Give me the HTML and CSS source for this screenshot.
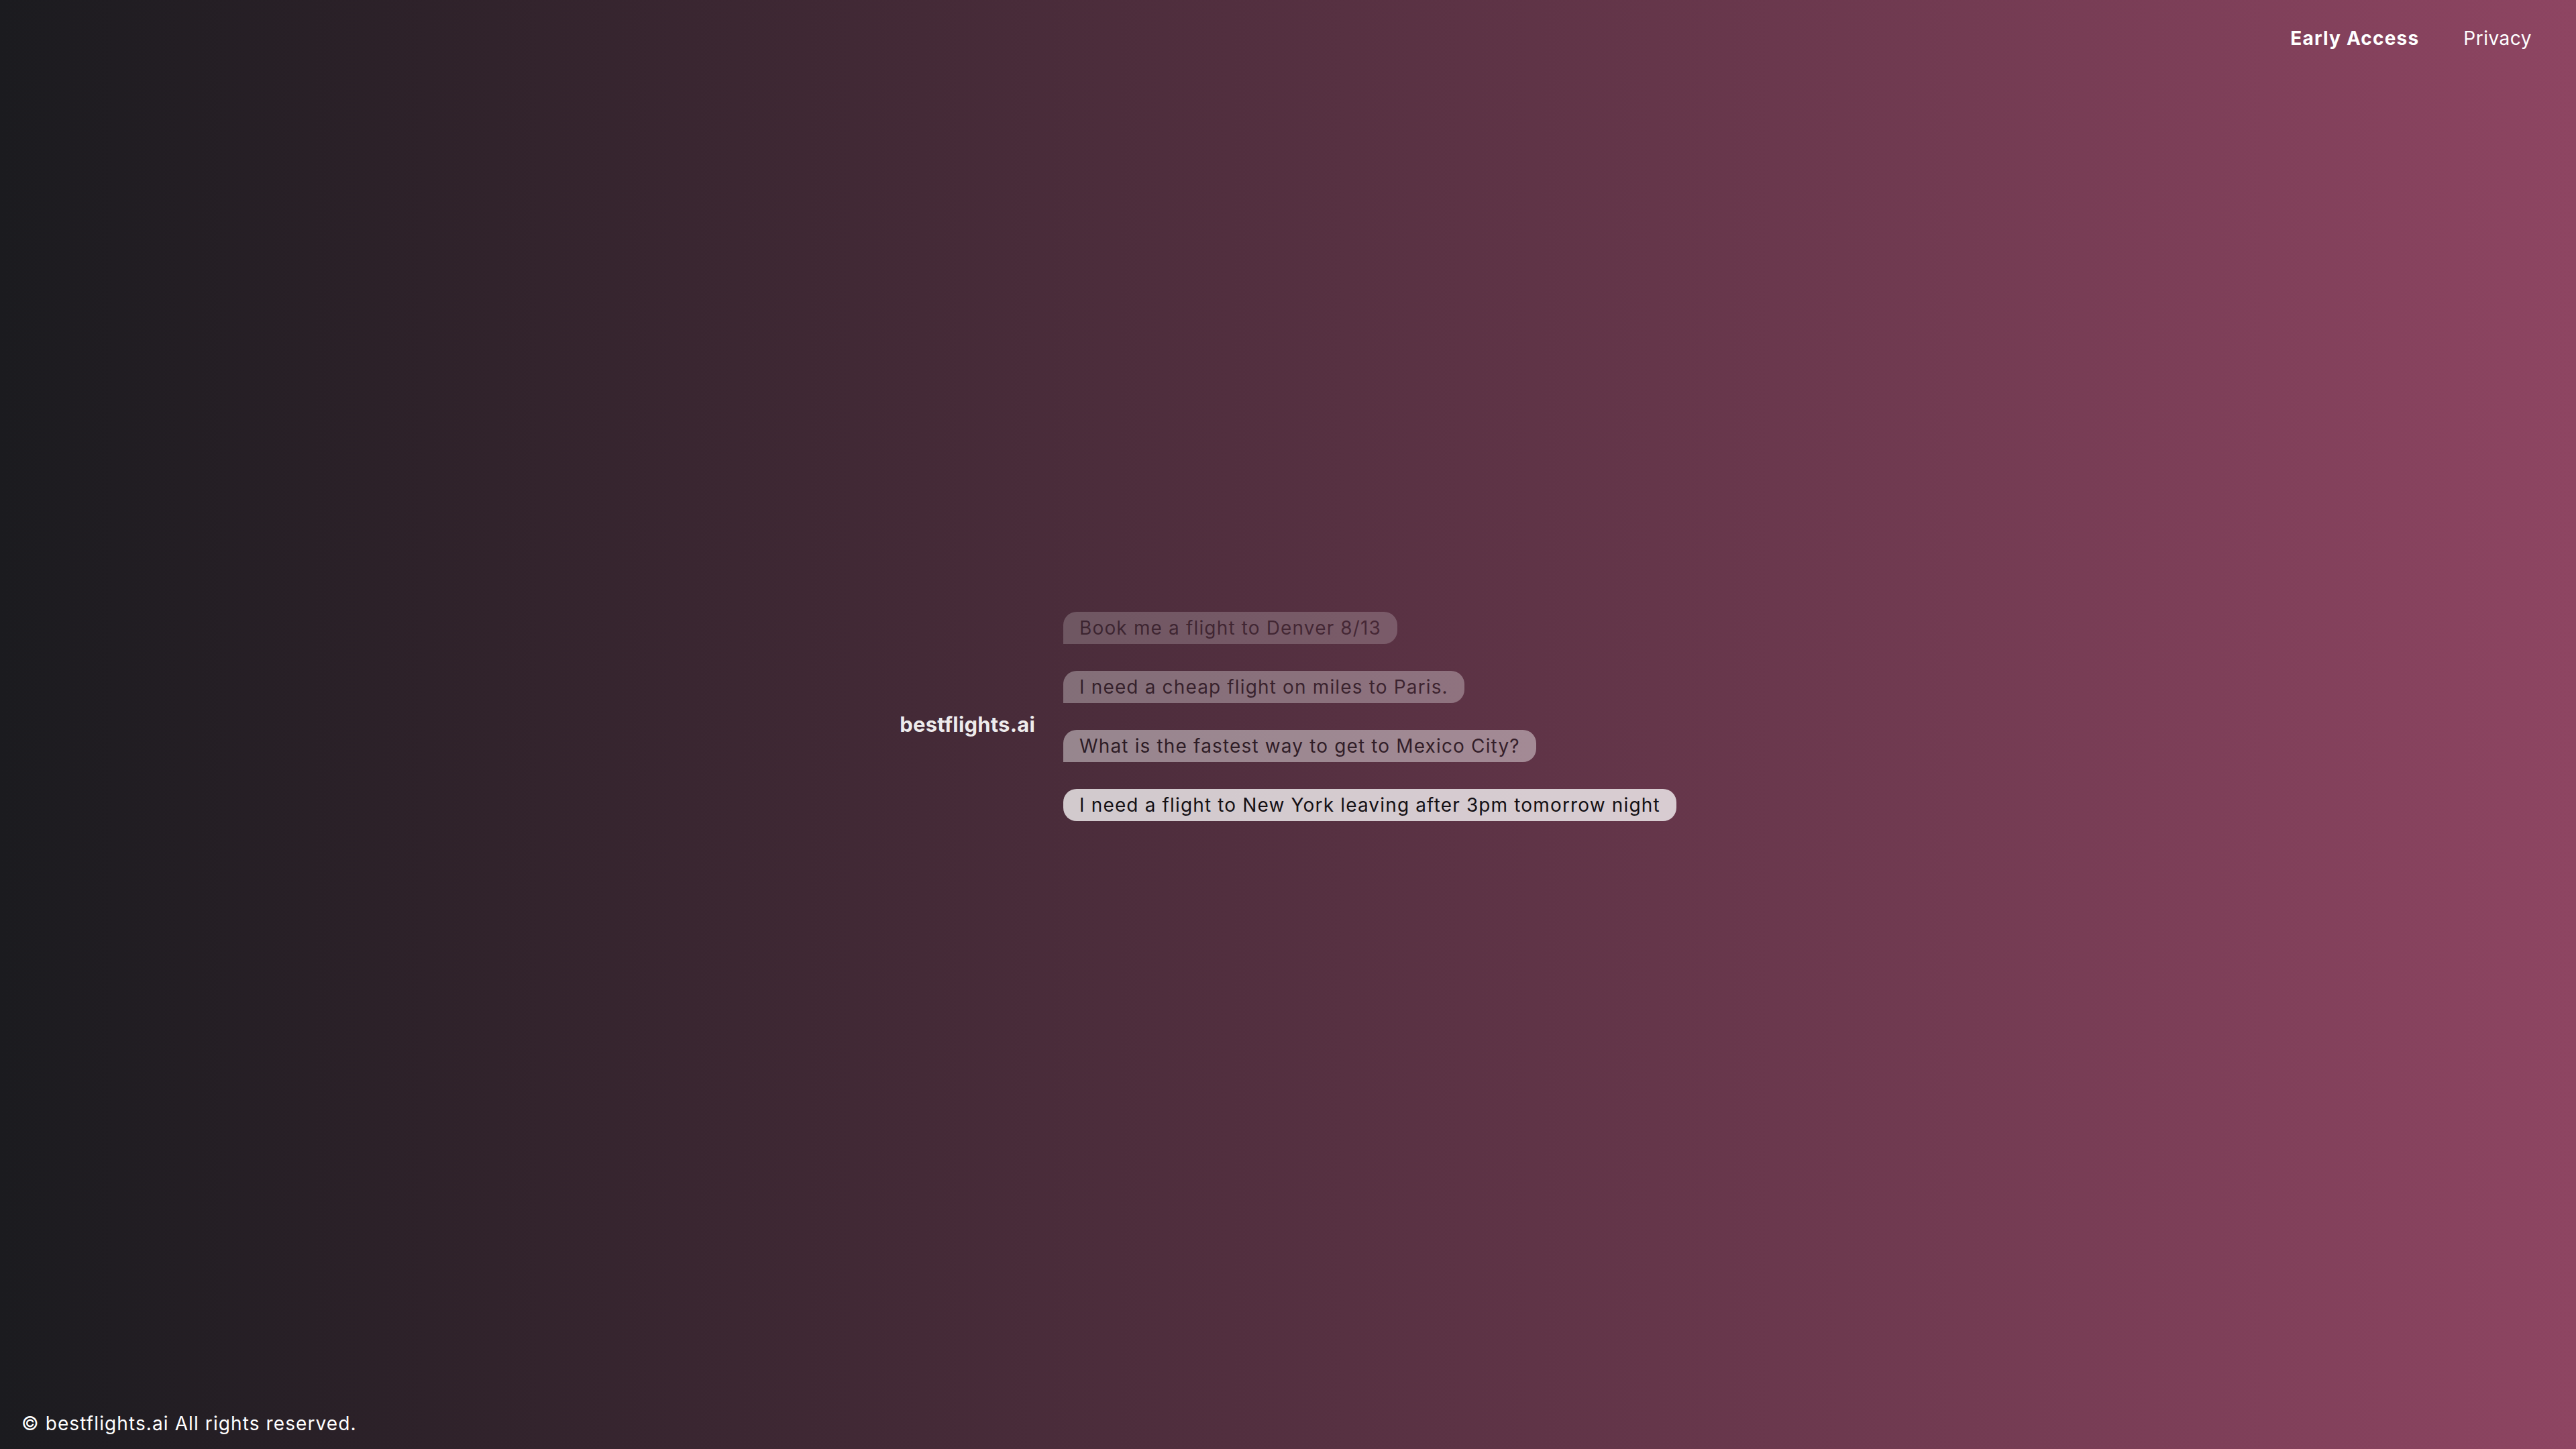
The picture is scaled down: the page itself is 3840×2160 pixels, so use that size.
FILE: index.html
```html
<!DOCTYPE html>
<html lang="en">
<head>
<meta charset="utf-8">
<title>bestflights.ai</title>
<link rel="stylesheet" href="styles.css">
</head>
<body>
<div class="page">
  <header class="header">
    <nav class="nav">
      <a class="nav-link nav-strong" href="#">Early Access</a>
      <a class="nav-link" href="#">Privacy</a>
    </nav>
  </header>
  <main class="main">
    <div class="hero">
      <div class="logo">bestflights.ai</div>
      <div class="bubbles">
        <div class="bubble bubble-1">Book me a flight to Denver 8/13</div>
        <div class="bubble bubble-2">I need a cheap flight on miles to Paris.</div>
        <div class="bubble bubble-3">What is the fastest way to get to Mexico City?</div>
        <div class="bubble bubble-4">I need a flight to New York leaving after 3pm tomorrow night</div>
      </div>
    </div>
  </main>
  <footer class="footer">© bestflights.ai All rights reserved.</footer>
</div>
</body>
</html>
```
FILE: styles.css
```css
* { box-sizing: border-box; }
html, body { margin: 0; padding: 0; }
body {
  font-family: Inter, "Noto Sans", "Liberation Sans", sans-serif;
  color: #fff;
  background: linear-gradient(to right, #1b1b1f 0%, #8e4562 100%);
  width: 3840px;
  height: 2160px;
  overflow: hidden;
}
.page {
  height: 2160px;
  display: flex;
  flex-direction: column;
}
.header {
  display: flex;
  justify-content: flex-end;
  padding: 37px 66px 0 0;
}
.nav {
  display: flex;
  gap: 66px;
}
.nav-link {
  color: #fff;
  text-decoration: none;
  font-size: 28px;
  line-height: 40px;
  font-weight: 400;
  letter-spacing: 0.5px;
}
.nav-strong { font-weight: 700; letter-spacing: 1.2px; }
.main {
  flex: 1;
  display: flex;
  align-items: center;
  justify-content: center;
}
.hero {
  display: flex;
  align-items: center;
  gap: 42px;
  margin-bottom: 43px;
}
.logo {
  font-size: 31px;
  line-height: 48px;
  font-weight: 700;
  color: rgba(255, 255, 255, 0.92);
  margin-top: 24px;
  letter-spacing: 0.2px;
}
.bubbles {
  display: flex;
  flex-direction: column;
  align-items: flex-start;
  gap: 40px;
}
.bubble {
  font-size: 28px;
  line-height: 40px;
  padding: 4px 24px;
  letter-spacing: 1.15px;
  background: rgba(255, 255, 255, 0.75);
  color: #141014;
  border-radius: 20px 20px 20px 0;
  white-space: nowrap;
}
.bubble-1 { opacity: 0.27; }
.bubble-2 { opacity: 0.42; }
.bubble-3 { opacity: 0.57; }
.bubble-4 { opacity: 1; border-radius: 20px; }
.footer {
  font-size: 28px;
  line-height: 40px;
  letter-spacing: 1.1px;
  padding: 0 32px 18px 32px;
  color: #fff;
}
```
